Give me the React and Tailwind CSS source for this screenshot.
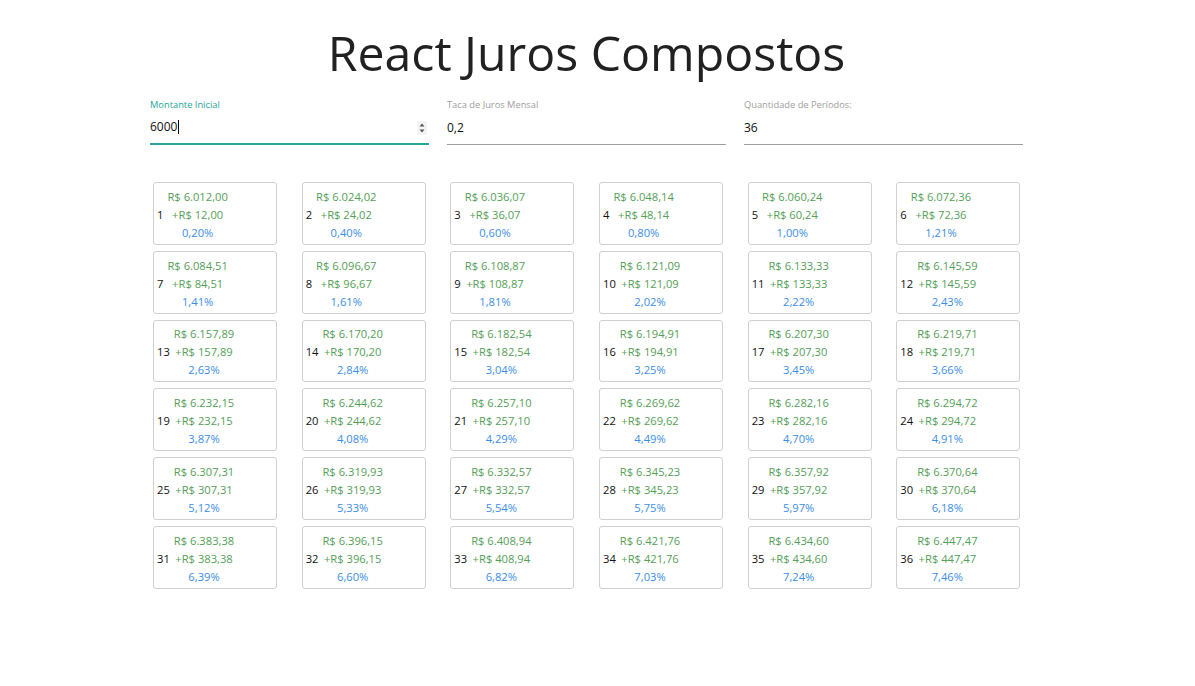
import React from "react";

function fmt(n) {
  const fixed = n.toFixed(2);
  const [int, dec] = fixed.split(".");
  const withDots = int.replace(/\B(?=(\d{3})+(?!\d))/g, ".");
  return withDots + "," + dec;
}

const items = Array.from({ length: 36 }, (_, k) => {
  const i = k + 1;
  const amount = 6000 * Math.pow(1.002, i);
  const interest = amount - 6000;
  const pct = (interest / 6000) * 100;
  return { i, amount, interest, pct };
});

function Field({ label, value, active, spinner }) {
  return (
    <div className="w-[279px] flex flex-col">
      <div
        className={
          "text-[9.3px] leading-[12px] h-[12px] " +
          (active ? "text-[#26a69a]" : "text-[#9e9e9e]")
        }
      >
        {label}
      </div>
      <div
        className={
          "relative h-[30px] mt-[4px] flex items-center text-[12px] text-[#111] " +
          (active ? "border-b-2 border-[#26a69a]" : "border-b border-[#9e9e9e]")
        }
      >
        <span className="pb-[4px]">{value}</span>
        {active && <span className="w-px h-[14px] bg-black ml-[1px] mb-[4px]" />}
        {spinner && (
          <svg
            className="absolute right-[2px] top-[6px]"
            width="10"
            height="14"
            viewBox="0 0 10 14"
          >
            <rect x="0" y="0" width="10" height="14" fill="#f4f4f4" />
            <path d="M2.5 5.5 L5 2.5 L7.5 5.5 Z" fill="#555" />
            <path d="M2.5 8.5 L5 11.5 L7.5 8.5 Z" fill="#555" />
          </svg>
        )}
      </div>
    </div>
  );
}

export default function App() {
  return (
    <div
      className="w-[1195px] h-[686px] bg-white overflow-hidden"
      style={{ fontFamily: '"Open Sans", "Noto Sans", sans-serif' }}
    >
      <div className="ml-[150px] w-[873px]">
        <h1 className="text-center text-[48.2px] leading-[60px] pt-[22px] text-[#212121]">
          React Juros Compostos
        </h1>
        <div className="flex gap-[18px] mt-[17px]">
          <Field label="Montante Inicial" value="6000" active spinner />
          <Field label="Taca de Juros Mensal" value="0,2" />
          <Field label="Quantidade de Períodos:" value="36" />
        </div>
      </div>
      <div className="ml-[150px] w-[892px] grid grid-cols-6 gap-y-[6px] mt-[37px]">
        {items.map((it) => (
          <div
            key={it.i}
            className="ml-[3px] w-[124px] h-[62.8px] border border-[#d0d0d0] rounded-[3px] flex items-center pl-[3px] gap-[4px] text-[11.2px] leading-[18px] pt-[3px]"
          >
            <span className="text-[#111]">{it.i}</span>
            <div className="flex flex-col items-center">
              <span className="text-[#55a058]">R$ {fmt(it.amount)}</span>
              <span className="text-[#55a058]">+R$ {fmt(it.interest)}</span>
              <span className="text-[#3b8ee6]">{fmt(it.pct)}%</span>
            </div>
          </div>
        ))}
      </div>
    </div>
  );
}
